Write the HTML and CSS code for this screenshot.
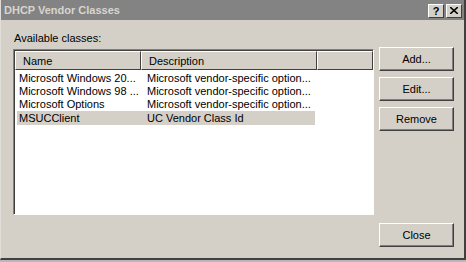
FILE: index.html
```html
<!DOCTYPE html>
<html lang="en">
<head>
    <meta charset="UTF-8">
    <title>DHCP Vendor Classes</title>
    <link rel="stylesheet" href="styles.css">
</head>
<body>
    <div class="window">
        <div class="titlebar">
            <span class="title">DHCP Vendor Classes</span>
            <div class="caption-buttons">
                <span class="cap-btn">?</span>
                <span class="cap-btn">
                    <svg width="8" height="7" viewBox="0 0 8 7">
                        <path d="M0 0 L8 7 M8 0 L0 7" stroke="#000" stroke-width="1.6"/>
                    </svg>
                </span>
            </div>
        </div>

        <div class="content">
            <div class="list-area">
                <div class="label">Available classes:</div>
                <div class="listview">
                    <div class="list-header">
                        <div class="col col-name">Name</div>
                        <div class="col col-desc">Description</div>
                        <div class="col col-rest"></div>
                    </div>
                    <div class="list-body">
                        <div class="row">
                            <span class="cell-name">Microsoft Windows 20...</span>
                            <span class="cell-desc">Microsoft vendor-specific option...</span>
                        </div>
                        <div class="row">
                            <span class="cell-name">Microsoft Windows 98 ...</span>
                            <span class="cell-desc">Microsoft vendor-specific option...</span>
                        </div>
                        <div class="row">
                            <span class="cell-name">Microsoft Options</span>
                            <span class="cell-desc">Microsoft vendor-specific option...</span>
                        </div>
                        <div class="row selected">
                            <span class="cell-name">MSUCClient</span>
                            <span class="cell-desc">UC Vendor Class Id</span>
                        </div>
                    </div>
                </div>
            </div>

            <div class="button-area">
                <button class="btn">Add...</button>
                <button class="btn">Edit...</button>
                <button class="btn">Remove</button>
                <button class="btn btn-close">Close</button>
            </div>
        </div>
    </div>
    <div class="below"></div>
</body>
</html>
```

FILE: styles.css
```css
body {
    margin: 0;
    padding: 0;
    width: 466px;
    height: 262px;
    overflow: hidden;
    background-color: #d4d0c8;
    font-family: 'Liberation Sans', Arial, sans-serif;
    font-size: 11px;
    color: #000;
}

.window {
    height: 260px;
    box-sizing: border-box;
    border-left: 1px solid #e0ddd6;
    border-right: 2px solid #404040;
    border-bottom: 2px solid #404040;
    background-color: #d4d0c8;
    display: flex;
    flex-direction: column;
}

.titlebar {
    height: 20px;
    background-color: #838383;
    display: flex;
    align-items: center;
    justify-content: space-between;
    padding: 0 2px 0 3px;
}

.title {
    font-weight: bold;
    color: #d8d5ce;
    font-size: 11px;
}

.caption-buttons {
    display: flex;
    gap: 2px;
    margin-top: 1px;
}

.cap-btn {
    width: 14px;
    height: 12px;
    background-color: #d4d0c8;
    border-top: 1px solid #fff;
    border-left: 1px solid #fff;
    border-right: 1px solid #404040;
    border-bottom: 1px solid #404040;
    display: flex;
    align-items: center;
    justify-content: center;
    font-weight: bold;
    font-size: 11px;
}

.content {
    flex: 1;
    display: flex;
    padding: 0 8px 0 12px;
}

.list-area {
    width: 361px;
    padding-top: 12px;
}

.label {
    height: 17px;
    padding-left: 1px;
}

.listview {
    height: 166px;
    box-sizing: border-box;
    background-color: #fff;
    border-top: 1px solid #808080;
    border-left: 1px solid #808080;
    border-right: 1px solid #fff;
    border-bottom: 1px solid #fff;
    box-shadow: inset 1px 1px 0 #404040;
}

.list-header {
    display: flex;
    height: 19px;
    margin: 1px 0 0 1px;
}

.col {
    box-sizing: border-box;
    background-color: #d4d0c8;
    border-top: 1px solid #fff;
    border-left: 1px solid #fff;
    border-right: 1px solid #404040;
    border-bottom: 1px solid #404040;
    padding: 3px 0 0 7px;
}

.col-name {
    width: 126px;
}

.col-desc {
    width: 176px;
}

.col-rest {
    flex: 1;
}

.list-body {
    padding: 2px 0 0 3px;
}

.row {
    display: flex;
    height: 13px;
    line-height: 13px;
    width: 298px;
}

.row.selected {
    background-color: #d4d0c8;
    height: 14px;
    line-height: 14px;
}

.cell-name {
    width: 128px;
    padding-left: 2px;
}

.cell-desc {
    flex: 1;
}

.button-area {
    display: flex;
    flex-direction: column;
    gap: 6px;
    padding: 27px 0 0 5px;
}

.btn {
    width: 75px;
    height: 24px;
    background-color: #d4d0c8;
    font-family: 'Liberation Sans', Arial, sans-serif;
    font-size: 11px;
    color: #000;
    padding: 0;
    border-top: 1px solid #fff;
    border-left: 1px solid #fff;
    border-right: 1px solid #404040;
    border-bottom: 1px solid #404040;
    box-shadow: inset -1px -1px 0 #808080;
}

.btn-close {
    margin-top: auto;
    margin-bottom: 11px;
}

.below {
    height: 2px;
    background-color: #b8b8b8;
}
```
